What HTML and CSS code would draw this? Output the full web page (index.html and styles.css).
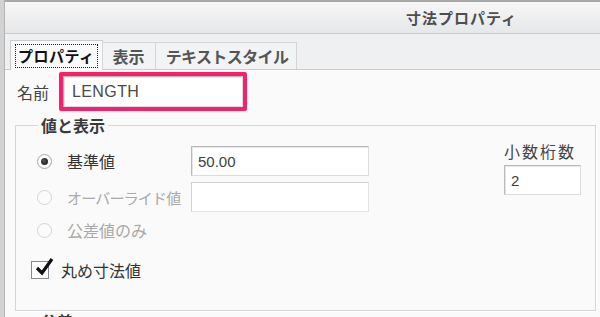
FILE: index.html
```html
<!DOCTYPE html>
<html lang="ja">
<head>
<meta charset="utf-8">
<link rel="stylesheet" href="styles.css">
</head>
<body>
<div class="window">
  <div class="titlebar"><span class="title">寸法プロパティ</span></div>
  <div class="tabbar">
    <div class="tab active"><span class="focus">プロパティ</span></div>
    <div class="tab">表示</div>
    <div class="tab narrow">テキストスタイル</div>
  </div>
  <div class="content">
    <div class="name-row">
      <span class="label">名前</span>
      <div class="highlight"><div class="field name-field">LENGTH</div></div>
    </div>
    <fieldset class="group">
      <legend>値と表示</legend>
      <div class="group-body">
        <div class="options">
          <div class="opt-row">
            <span class="radio checked"></span>
            <span class="opt-label">基準値</span>
            <div class="field value-field">50.00</div>
          </div>
          <div class="opt-row disabled">
            <span class="radio"></span>
            <span class="opt-label kana">オーバーライド値</span>
            <div class="field value-field"></div>
          </div>
          <div class="opt-row disabled">
            <span class="radio"></span>
            <span class="opt-label">公差値のみ</span>
          </div>
          <div class="check-row">
            <span class="checkbox">
              <svg viewBox="0 0 20 20" width="20" height="20"><path d="M3 10 L8 15 L18 1" fill="none" stroke="#111" stroke-width="3.2" stroke-linejoin="miter"/></svg>
            </span>
            <span class="opt-label">丸め寸法値</span>
          </div>
        </div>
        <div class="decimals">
          <div class="dec-label">小数桁数</div>
          <div class="field dec-field">2</div>
        </div>
      </div>
    </fieldset>
    <fieldset class="group next">
      <legend>公差</legend>
    </fieldset>
  </div>
</div>
</body>
</html>
```
FILE: styles.css
```css
html, body {
  margin: 0;
  padding: 0;
  width: 600px;
  height: 317px;
  overflow: hidden;
  background: #fafafa;
  font-family: "Noto Sans CJK JP", "Noto Sans", sans-serif;
  color: #333;
}

.window {
  height: 317px;
  border-left: 4px solid #d2d2d2;
  box-shadow: inset 1px 0 0 #b4b4b4;
  background: #fafafa;
  overflow: hidden;
}

.titlebar {
  height: 31px;
  border-top: 2px solid #a9a9a9;
  border-bottom: 1px solid #c9cbcd;
  background: linear-gradient(#f7f7f7, #e6e7e9);
  display: flex;
  align-items: center;
  justify-content: center;
  padding-left: 318px;
  margin-left: 1px;
}

.title {
  font-size: 15px;
  font-weight: bold;
  color: #4e4e4e;
  letter-spacing: 1px;
}

.tabbar {
  height: 35px;
  background: #eef0f2;
  border-bottom: 1px solid #c9cbcd;
  display: flex;
  align-items: flex-end;
  padding-left: 6px;
  margin-left: 1px;
}

.tab {
  height: 26px;
  padding: 0 10px;
  display: flex;
  align-items: center;
  font-size: 16px;
  font-weight: bold;
  color: #555;
  background: #f2f3f4;
  border: 1px solid #d4d5d7;
  border-bottom: none;
  margin-left: -1px;
}

.tab.narrow {
  letter-spacing: -0.6px;
  padding: 0 8px 0 10px;
}

.tab.active {
  height: 29px;
  background: #fafafa;
  color: #111;
  padding: 0 4px;
  margin-bottom: -1px;
  border-color: #c9cbcd;
  font-size: 15px;
}

.focus {
  border: 1px dotted #222;
  padding: 0 2px;
  line-height: 22px;
  letter-spacing: 0.5px;
}

.content {
  padding: 2px 0 0 11px;
}

.name-row {
  display: flex;
  align-items: center;
  height: 39px;
}

.label {
  font-size: 16px;
  color: #444;
  width: 44px;
  padding-left: 2px;
  box-sizing: border-box;
}

.highlight {
  border: 4px solid #fb1f6b;
  border-radius: 2px;
}

.field {
  background: #fff;
  border: 1px solid #b9b9b9;
  border-right-color: #dcdcdc;
  border-bottom-color: #dcdcdc;
  box-shadow: inset 1px 1px 0 #e6e6e6;
  font-family: "Liberation Sans", "Noto Sans", sans-serif;
  font-size: 15px;
  color: #404040;
  box-sizing: border-box;
  display: flex;
  align-items: center;
  padding-left: 6px;
}

.name-field {
  width: 180px;
  height: 31px;
  padding-left: 8px;
  font-size: 16px;
  letter-spacing: 0.4px;
  color: #4a4a4a;
}

.group {
  margin: 4px 4px 0 0;
  padding: 0;
  border: 1px solid #d6d6d6;
  box-shadow: 1px 1px 0 #fff;
  min-width: 0;
  height: 196px;
  box-sizing: border-box;
}

.group legend {
  margin-left: 22px;
  padding: 0 3px;
  font-size: 16px;
  font-weight: bold;
  color: #3a3a3a;
  line-height: 20px;
}

.group-body {
  display: flex;
  justify-content: space-between;
}

.options {
  padding: 11px 0 0 21px;
}

.opt-row {
  display: flex;
  align-items: center;
  height: 30px;
  margin-bottom: 6px;
}

.radio {
  width: 13px;
  height: 13px;
  border: 1px solid #a8a8a8;
  border-radius: 50%;
  background: radial-gradient(circle, #fff 60%, #ececec);
  position: relative;
  flex: none;
}

.radio.checked::after {
  content: "";
  position: absolute;
  left: 3px;
  top: 3px;
  width: 7px;
  height: 7px;
  border-radius: 50%;
  background: radial-gradient(circle at 40% 40%, #555, #111);
}

.opt-label {
  font-size: 16px;
  margin-left: 15px;
  color: #333;
}

.opt-label.kana {
  font-size: 15px;
  letter-spacing: -0.8px;
}

.opt-row .opt-label {
  width: 124px;
}

.disabled .radio {
  border-color: #d4d4d4;
  background: #fbfbfb;
}

.disabled .opt-label {
  color: #a9a9a9;
}

.value-field {
  width: 178px;
  height: 30px;
}

.disabled .value-field {
  border-color: #d2d2d2;
  border-right-color: #e4e4e4;
  border-bottom-color: #e4e4e4;
  box-shadow: none;
}

.opt-row:nth-child(3) {
  margin-top: -3px;
}

.check-row {
  display: flex;
  align-items: center;
  margin-top: 12px;
  margin-left: -6px;
  height: 26px;
}

.checkbox {
  width: 16px;
  height: 16px;
  border: 1px solid #8a8a8a;
  background: #fff;
  position: relative;
  flex: none;
}

.checkbox svg {
  position: absolute;
  left: 2px;
  top: -4px;
}

.check-row .opt-label {
  margin-left: 12px;
}

.decimals {
  padding: 4px 14px 0 0;
  display: flex;
  flex-direction: column;
  align-items: flex-start;
}

.dec-label {
  font-size: 16px;
  color: #444;
  letter-spacing: 2px;
  margin-bottom: 2px;
}

.dec-field {
  width: 77px;
  height: 30px;
}

.group.next {
  margin-top: 0;
  height: 40px;
  border-color: transparent;
  box-shadow: none;
}
```
